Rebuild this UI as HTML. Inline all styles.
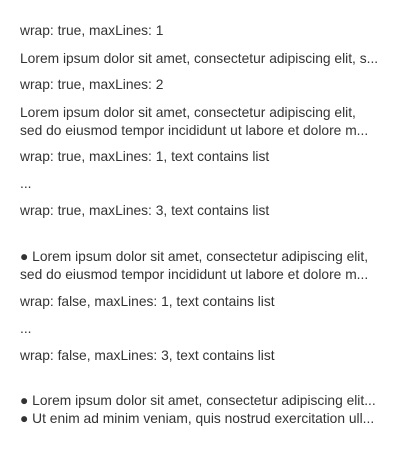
<!DOCTYPE html>
<html><head><style>
body{margin:0;background:#fff;width:400px;height:449px;overflow:hidden;}
div.l{position:absolute;left:20px;width:375px;height:18px;line-height:18px;font-family:"Liberation Sans",sans-serif;font-size:13.8px;color:#333;white-space:nowrap;overflow:hidden;}
</style></head><body>
<div class="l" style="top:22px">wrap: true, maxLines: 1</div>
<div class="l" style="top:50px">Lorem ipsum dolor sit amet, consectetur adipiscing elit, s...</div>
<div class="l" style="top:76px">wrap: true, maxLines: 2</div>
<div class="l" style="top:104px">Lorem ipsum dolor sit amet, consectetur adipiscing elit,</div>
<div class="l" style="top:122px">sed do eiusmod tempor incididunt ut labore et dolore m...</div>
<div class="l" style="top:148px">wrap: true, maxLines: 1, text contains list</div>
<div class="l" style="top:175px">...</div>
<div class="l" style="top:202px">wrap: true, maxLines: 3, text contains list</div>
<div class="l" style="top:248px">● Lorem ipsum dolor sit amet, consectetur adipiscing elit,</div>
<div class="l" style="top:266px">sed do eiusmod tempor incididunt ut labore et dolore m...</div>
<div class="l" style="top:293px">wrap: false, maxLines: 1, text contains list</div>
<div class="l" style="top:320px">...</div>
<div class="l" style="top:347px">wrap: false, maxLines: 3, text contains list</div>
<div class="l" style="top:392px">● Lorem ipsum dolor sit amet, consectetur adipiscing elit...</div>
<div class="l" style="top:410px">● Ut enim ad minim veniam, quis nostrud exercitation ull...</div>
</body></html>
